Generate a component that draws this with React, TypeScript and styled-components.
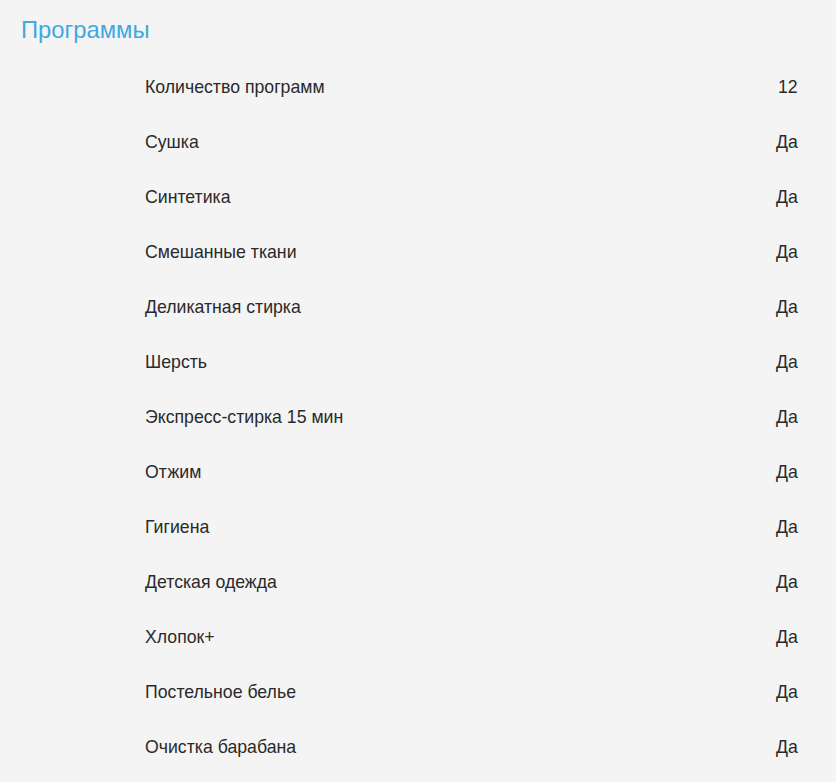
import React from 'react';
import styled, { createGlobalStyle } from 'styled-components';

const GlobalStyle = createGlobalStyle`
  html, body {
    margin: 0;
    padding: 0;
    background-color: #f4f4f4;
  }
  body {
    font-family: "Liberation Sans", Arial, sans-serif;
  }
`;

const Section = styled.section`
  padding: 15px 0 8px 0;
  background-color: #f4f4f4;
`;

const Title = styled.h2`
  margin: 0 0 15px 21px;
  font-size: 23.8px;
  line-height: 30px;
  font-weight: 400;
  color: #3fa9e0;
`;

const List = styled.div`
  display: flex;
  flex-direction: column;
  padding-left: 145px;
`;

const Row = styled.div`
  display: grid;
  grid-template-columns: 1fr 60px;
  height: 55px;
  align-items: center;
  font-size: 17.7px;
  color: #2a2a2a;
`;

const Label = styled.span``;

const Value = styled.span<{ $shift?: number }>`
  padding-left: ${(p) => p.$shift ?? 0}px;
`;

interface Spec {
  label: string;
  value: string;
}

const specs: Spec[] = [
  { label: 'Количество программ', value: '12' },
  { label: 'Сушка', value: 'Да' },
  { label: 'Синтетика', value: 'Да' },
  { label: 'Смешанные ткани', value: 'Да' },
  { label: 'Деликатная стирка', value: 'Да' },
  { label: 'Шерсть', value: 'Да' },
  { label: 'Экспресс-стирка 15 мин', value: 'Да' },
  { label: 'Отжим', value: 'Да' },
  { label: 'Гигиена', value: 'Да' },
  { label: 'Детская одежда', value: 'Да' },
  { label: 'Хлопок+', value: 'Да' },
  { label: 'Постельное белье', value: 'Да' },
  { label: 'Очистка барабана', value: 'Да' },
];

const App: React.FC = () => {
  return (
    <>
      <GlobalStyle />
      <Section>
        <Title>Программы</Title>
        <List>
          {specs.map((s) => (
            <Row key={s.label}>
              <Label>{s.label}</Label>
              <Value $shift={s.value === '12' ? 2 : 0}>{s.value}</Value>
            </Row>
          ))}
        </List>
      </Section>
    </>
  );
};

export default App;
